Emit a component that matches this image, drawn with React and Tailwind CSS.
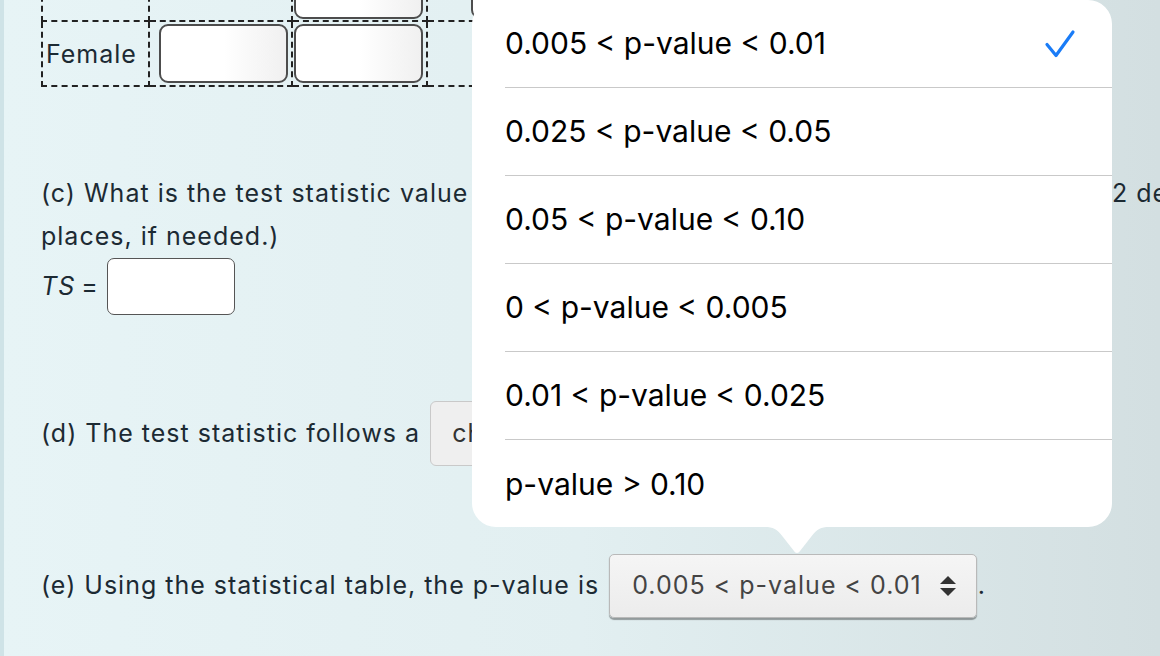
const options = [
  '0.005 < p-value < 0.01',
  '0.025 < p-value < 0.05',
  '0.05 < p-value < 0.10',
  '0 < p-value < 0.005',
  '0.01 < p-value < 0.025',
  'p-value > 0.10',
]

function Field({ className }) {
  return (
    <div
      className={`h-[59px] w-[129px] rounded-[9px] border-2 border-[#4d4d4d] bg-gradient-to-r from-white via-white to-[#f0f0f0] ${className || ''}`}
    />
  )
}

function UpDown() {
  return (
    <svg width="18" height="22" viewBox="0 0 18 22" className="ml-[17px]">
      <path d="M9 1 L17 9 H1 Z" fill="#333" />
      <path d="M9 21 L17 13 H1 Z" fill="#333" />
    </svg>
  )
}

function Picker() {
  return (
    <div className="absolute left-[468px] top-0 w-[640px]">
      <div className="h-[527px] overflow-hidden rounded-[24px] bg-white">
        {options.map((opt, i) => (
          <div key={opt} className="flex h-[88px] items-center pl-[33px]">
            <div
              className={`flex h-full flex-1 items-center pr-[36px] ${i < options.length - 1 ? 'border-b border-[#c9c9c9]' : ''}`}
            >
              <span className="flex-1 text-[30px] text-black">{opt}</span>
              {i === 0 && (
                <svg width="32" height="30" viewBox="0 0 32 30">
                  <path
                    d="M3 15.5 L12 26.5 L29 3"
                    fill="none"
                    stroke="#1a7cf7"
                    strokeWidth="3.2"
                    strokeLinecap="round"
                    strokeLinejoin="round"
                  />
                </svg>
              )}
            </div>
          </div>
        ))}
      </div>
      <svg width="64" height="27" viewBox="0 0 64 27" className="ml-[293px]">
        <path d="M0 0 H64 C56 0 52 2 46 10 L35 24 C33.5 26.5 30.5 26.5 29 24 L18 10 C12 2 8 0 0 0 Z" fill="#fff" />
      </svg>
    </div>
  )
}

export default function App() {
  return (
    <div
      className="relative h-[656px] w-[1160px] overflow-hidden border-l-[4px] border-[#cfe3e7] bg-gradient-to-r from-[#e7f4f6] via-[#e2eff1] to-[#d3dfe1] text-[#1c2a33]"
      style={{ fontFamily: 'Inter, "Noto Sans", sans-serif' }}
    >
      <div className="pl-[37px] text-[25px] tracking-[1px]">
        <table className="-mt-[45px] border-collapse">
          <tbody>
            <tr className="h-[65px]">
              <td className="w-[107px] border-2 border-dashed border-[#222]" />
              <td className="w-[143px] border-2 border-dashed border-[#222]" />
              <td className="w-[135px] border-2 border-dashed border-[#222] pl-[1px]">
                <Field className="mt-[2px]" />
              </td>
              <td className="w-[200px] border-2 border-dashed border-[#222] pl-[43px]">
                <Field className="mt-[2px]" />
              </td>
            </tr>
            <tr className="h-[65px]">
              <td className="border-2 border-dashed border-[#222] pl-[3px] pt-[3px]">Female</td>
              <td className="border-2 border-dashed border-[#222] pl-[9px]">
                <Field />
              </td>
              <td className="border-2 border-dashed border-[#222] pl-[1px]">
                <Field />
              </td>
              <td className="border-2 border-dashed border-[#222]" />
            </tr>
          </tbody>
        </table>

        <div className="mt-[85px] leading-[43px]">
          <div className="flex whitespace-nowrap">
            <span className="w-[1071px] shrink-0">(c) What is the test statistic value</span>
            <span className="shrink-0">2 decimal</span>
          </div>
          <div>places, if needed.)</div>
        </div>

        <div className="flex h-[57px] items-center">
          <span className="italic">TS</span>
          <span className="ml-[6px]">=</span>
          <div className="ml-[8px] h-[57px] w-[128px] rounded-[7px] border-[1.5px] border-[#555] bg-white" />
        </div>

        <div className="mt-[86px] flex items-center">
          <span>(d) The test statistic follows a</span>
          <div className="ml-[10px] flex h-[65px] w-[300px] items-center rounded-[6px] border border-[#c9c9c9] bg-[#efefef] pl-[21px] text-[#333]">
            chi-square
          </div>
        </div>

        <div className="mt-[88px] flex items-center">
          <span>(e) Using the statistical table, the p-value is</span>
          <div className="ml-[10px] flex h-[64px] items-center rounded-[5px] border border-[#b9b9b9] bg-gradient-to-b from-[#f5f5f5] to-[#ececec] pl-[22px] pr-[19px] text-[#444] shadow-[0_1.5px_1px_rgba(0,0,0,0.35)]">
            0.005 &lt; p-value &lt; 0.01
            <UpDown />
          </div>
          <span className="ml-[1px]">.</span>
        </div>
      </div>

      <Picker />
    </div>
  )
}
